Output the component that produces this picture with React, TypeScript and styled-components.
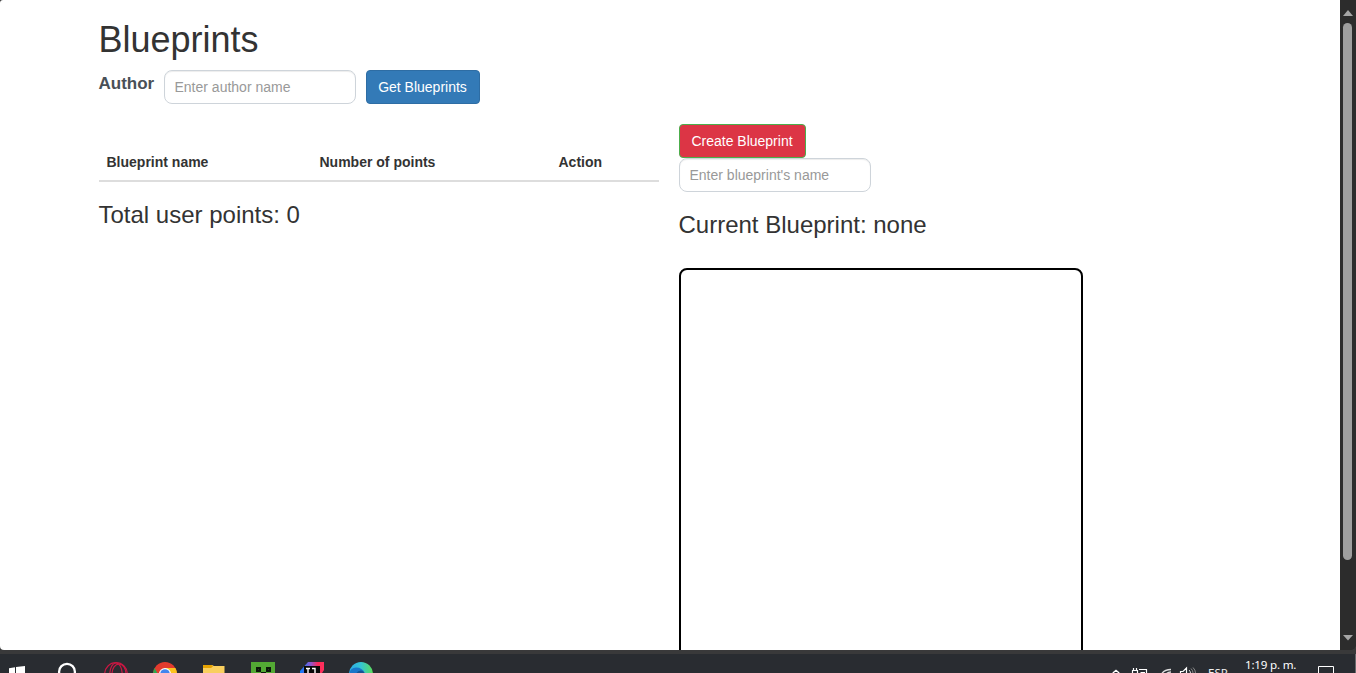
import React from 'react';
import styled, { createGlobalStyle } from 'styled-components';

const GlobalStyle = createGlobalStyle`
  * { box-sizing: border-box; }
  html, body { margin: 0; padding: 0; overflow: hidden; background: #39393a; }
  body {
    font-family: "Liberation Sans", Arial, sans-serif;
    font-size: 14px;
    line-height: 20px;
    color: #333;
  }
`;

const Screen = styled.div`
  display: flex;
  flex-direction: column;
  width: 1356px;
  height: 673px;
  overflow: hidden;
`;

const Browser = styled.div`
  display: flex;
  flex: 0 0 650px;
  overflow: hidden;
  border-radius: 3px 0 6px 4px;
  background: #2c2c2c;
`;

const Page = styled.main`
  flex: 1;
  height: 650px;
  padding: 20px 0 0 98.5px;
  overflow: hidden;
  background: #fff;
`;

const Title = styled.h1`
  margin: 0 0 10px;
  font-size: 36px;
  font-weight: 400;
  line-height: 40px;
`;

const SearchRow = styled.div`
  display: flex;
  gap: 10px;
`;

const AuthorLabel = styled.label`
  width: 55px;
  padding-top: 2px;
  color: #495057;
  font-size: 17px;
  font-weight: 700;
  line-height: 24px;
  white-space: nowrap;
`;

const TextInput = styled.input`
  display: block;
  width: 192px;
  height: 34px;
  padding: 6px 10px;
  border: 1px solid #ced4da;
  border-radius: 8px;
  background: #fff;
  box-shadow: inset 0 1px 1px rgba(0, 0, 0, 0.075);
  font: 14px/20px "Liberation Sans", Arial, sans-serif;
  &::placeholder { color: #999; opacity: 1; }
`;

const Button = styled.button<{ $fill: string; $edge: string; $width: number }>`
  display: block;
  width: ${(p) => p.$width}px;
  height: 34px;
  padding: 0;
  border: 1px solid ${(p) => p.$edge};
  border-radius: 4px;
  background: ${(p) => p.$fill};
  color: #fff;
  font: 14px/20px "Liberation Sans", Arial, sans-serif;
  white-space: nowrap;
`;

const Columns = styled.div`
  display: flex;
  gap: 20px;
  margin-top: 20px;
`;

const ListColumn = styled.section`
  width: 560px;
  padding-top: 20px;
`;

const Table = styled.table`
  width: 560px;
  margin-bottom: 20px;
  border-collapse: separate;
  border-spacing: 0;
  table-layout: fixed;
`;

const HeadCell = styled.th<{ $width: number }>`
  width: ${(p) => p.$width}px;
  height: 38px;
  padding: 0 8px;
  border-bottom: 2px solid #ddd;
  text-align: left;
  font-weight: 700;
`;

const Heading = styled.h3`
  margin: 0;
  font-size: 24px;
  font-weight: 400;
  line-height: 26px;
`;

const DrawColumn = styled.section`
  width: 560px;
  ${Heading} { margin: 20px 0 30px; }
`;

const Canvas = styled.div`
  width: 404px;
  height: 504px;
  border: 2px solid #000;
  border-radius: 8px;
`;

const ScrollTrack = styled.div`
  display: flex;
  flex-direction: column;
  align-items: center;
  width: 16px;
  height: 650px;
  padding: 10px 1px 9px 0;
  background: #2c2c2c;
`;

const ScrollThumb = styled.div`
  width: 9px;
  height: 537px;
  margin: 7px 0 auto;
  border-radius: 5px;
  background: #9f9f9f;
`;

const Arrow = styled.svg`
  display: block;
  width: 10px;
  height: 6px;
  fill: #a5a5a5;
`;

const Taskbar = styled.footer`
  display: flex;
  flex: 0 0 19px;
  margin-top: 4px;
  overflow: hidden;
  background: #292c31;
  border-right: 1px solid #686a6d;
  svg { display: block; flex: none; }
`;

const Tray = styled.div`
  display: flex;
  margin-left: auto;
  color: #fff;
  font-family: "Noto Sans", "Open Sans", sans-serif;
  font-size: 12px;
  white-space: nowrap;
`;

const Language = styled.div`
  width: 37px;
  height: 19px;
  overflow: hidden;
  padding-top: 11px;
  font-size: 11.5px;
  line-height: 16px;
  color: #eee;
`;

const Clock = styled.div`
  width: 73px;
  padding-top: 3px;
  font-size: 11.6px;
  line-height: 16px;
  letter-spacing: -0.2px;
`;

const Slot = ({ width = 49, children }: { width?: number; children: React.ReactNode }) => (
  <svg width={width} height="19" viewBox={`0 0 ${width} 19`}>{children}</svg>
);

const AppIcons = () => (
  <>
    <Slot width={42}>
      <path d="M9 14.2 15 13.2V19H9ZM16 13 25 12V19H16Z" fill="#fff" />
    </Slot>
    <Slot>
      <circle cx="25" cy="17.7" r="7.9" fill="none" stroke="#fff" strokeWidth="2.3" />
    </Slot>
    <Slot>
      <g fill="none" stroke="#c91843" strokeWidth="1.2">
        <circle cx="25" cy="20" r="11.3" />
        <ellipse cx="25" cy="20" rx="6.2" ry="11" />
        <ellipse cx="28" cy="20" rx="7" ry="10" />
      </g>
    </Slot>
    <Slot>
      <circle cx="25" cy="20" r="12" fill="#e33b2e" />
      <path d="M14.6 14 20 24 13 22Q12.8 17 14.6 14Z" fill="#2da94f" />
      <path d="M25 14H35.4Q37 17 37 20H29Z" fill="#fcc31e" />
      <circle cx="25" cy="20" r="6" fill="#fff" />
      <circle cx="25" cy="20" r="4.8" fill="#4285ee" />
    </Slot>
    <Slot>
      <path d="M14 11H23L25 12H35.5V19H14Z" fill="#f9cf5e" />
      <path d="M14 11H22.5L24 12.5 22 14H14Z" fill="#e5a100" />
    </Slot>
    <Slot>
      <rect x="13" y="8" width="24" height="12" fill="#53a934" />
      <path d="M18 13H23V18H18ZM28 13H33V18H28ZM23 18H28V19H23Z" fill="#0c160a" />
      <path d="M20 15H21V16H20ZM30 15H31V16H30Z" fill="#28451d" />
    </Slot>
    <Slot>
      <defs>
        <linearGradient id="ideEdge" x1="0" x2="1">
          <stop offset="0" stopColor="#087cfa" />
          <stop offset=".45" stopColor="#8c57d0" />
          <stop offset=".75" stopColor="#fe2857" />
          <stop offset="1" stopColor="#fe315d" />
        </linearGradient>
      </defs>
      <path d="M13 17 21 8H37V16L35 19H13Z" fill="url(#ideEdge)" />
      <rect x="17" y="12" width="16" height="8" fill="#090909" />
      <path d="M19 14.5H23M21 14.5V19M25 14.5H28V19" fill="none" stroke="#fff" strokeWidth="1.4" />
    </Slot>
    <Slot>
      <defs>
        <linearGradient id="edgeSwirl" x1="0" x2="1">
          <stop offset="0" stopColor="#2ba7e5" />
          <stop offset=".5" stopColor="#35c5d2" />
          <stop offset="1" stopColor="#5ddd58" />
        </linearGradient>
      </defs>
      <circle cx="25" cy="20" r="12" fill="url(#edgeSwirl)" />
      <path d="M13.3 20Q14 14 20 13.5 27 13.5 29 20Z" fill="#1976c9" />
      <path d="M20 20Q21 16.8 25 16.5 28 17 29 20Z" fill="#155494" />
    </Slot>
  </>
);

const TrayIcons = () => (
  <>
    <Slot width={30}>
      <path d="M12.8 19 16 16.3 19.2 19" fill="none" stroke="#fff" strokeWidth="1.4" />
    </Slot>
    <Slot width={30}>
      <path d="M3.5 14V17M6.5 14V17M2 16.5H8M2.5 16.5V19M7.5 16.5V19M9 15.5H16.5V19M10.5 18.5H15" fill="none" stroke="#fff" strokeWidth="1.2" />
    </Slot>
    <Slot width={18}>
      <path d="M1.5 20Q4.5 15.5 11 15.5M6 20Q8 18 11 18" fill="none" stroke="#ddd" strokeWidth="1.3" />
    </Slot>
    <Slot width={30}>
      <path d="M2.5 19V17.5H5L8.5 14V19" fill="none" stroke="#fff" strokeWidth="1.2" />
      <path d="M11 16Q12.3 17 12.5 19" fill="none" stroke="#ddd" />
      <path d="M13 14.5Q15 16.5 15 19M15 13.5Q17.5 16 17.5 19" fill="none" stroke="#888" />
    </Slot>
  </>
);

export default function App() {
  return (
    <Screen>
      <GlobalStyle />
      <Browser>
        <Page>
          <Title>Blueprints</Title>
          <SearchRow>
            <AuthorLabel htmlFor="author">Author</AuthorLabel>
            <TextInput id="author" placeholder="Enter author name" />
            <Button $fill="#337ab7" $edge="#2e6da4" $width={114}>Get Blueprints</Button>
          </SearchRow>
          <Columns>
            <ListColumn>
              <Table>
                <thead>
                  <tr>
                    <HeadCell $width={213}>Blueprint name</HeadCell>
                    <HeadCell $width={239}>Number of points</HeadCell>
                    <HeadCell $width={108}>Action</HeadCell>
                  </tr>
                </thead>
              </Table>
              <Heading>Total user points: 0</Heading>
            </ListColumn>
            <DrawColumn>
              <Button $fill="#dc3545" $edge="#4cae4c" $width={127}>Create Blueprint</Button>
              <TextInput aria-label="Blueprint name" placeholder="Enter blueprint's name" />
              <Heading>Current Blueprint: none</Heading>
              <Canvas />
            </DrawColumn>
          </Columns>
        </Page>
        <ScrollTrack>
          <Arrow viewBox="0 0 10 6"><path d="M0 6 5 0 10 6Z" /></Arrow>
          <ScrollThumb />
          <Arrow viewBox="0 0 10 6"><path d="M0 0 5 5.5 10 0Z" /></Arrow>
        </ScrollTrack>
      </Browser>
      <Taskbar>
        <AppIcons />
        <Tray>
          <TrayIcons />
          <Language>ESP</Language>
          <Clock>1:19 p. m.</Clock>
          <Slot width={37}>
            <path d="M0.5 20V12.5H15.5V20" fill="none" stroke="#fff" />
          </Slot>
        </Tray>
      </Taskbar>
    </Screen>
  );
}
